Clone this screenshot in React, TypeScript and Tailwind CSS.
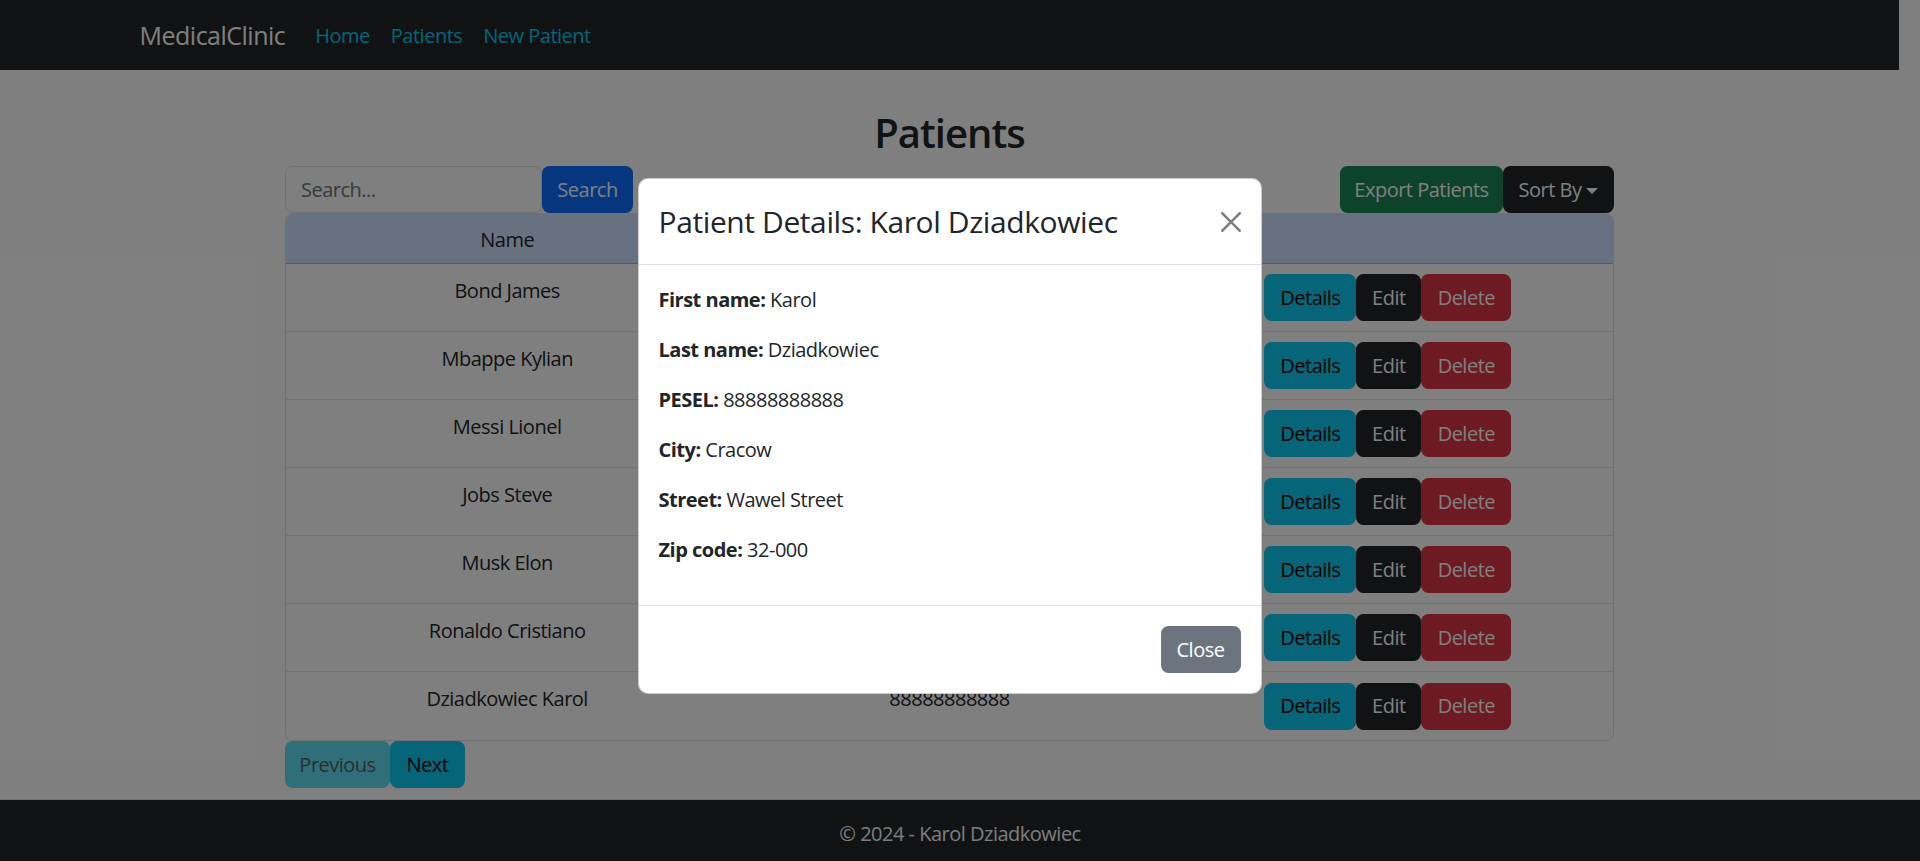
import React from 'react';

const patients = [
  { name: 'Bond James', pesel: '70010112345' },
  { name: 'Mbappe Kylian', pesel: '98122054321' },
  { name: 'Messi Lionel', pesel: '87062411223' },
  { name: 'Jobs Steve', pesel: '55022433445' },
  { name: 'Musk Elon', pesel: '71062855667' },
  { name: 'Ronaldo Cristiano', pesel: '85020577889' },
  { name: 'Dziadkowiec Karol', pesel: '88888888888' },
];

const details = [
  ['First name:', 'Karol'],
  ['Last name:', 'Dziadkowiec'],
  ['PESEL:', '88888888888'],
  ['City:', 'Cracow'],
  ['Street:', 'Wawel Street'],
  ['Zip code:', '32-000'],
];

const btn = 'h-[47px] flex items-center justify-center rounded-[7.5px] border border-transparent text-[20px] leading-[30px]';

const App: React.FC = () => {
  return (
    <div className="relative h-[861px] w-full overflow-hidden bg-white text-[#212529] tracking-[-0.5px] font-['Open_Sans','Noto_Sans',sans-serif]">
      <div className="flex h-full flex-col">
        <div className="flex-1 pr-[21px]">
          <nav className="h-[70px] bg-[#212529]">
            <div className="mx-auto flex h-full max-w-[1650px] items-center px-[15px] pt-[2px]">
              <span className="mr-[30px] text-[25px] text-white">MedicalClinic</span>
              <div className="flex gap-[21px] text-[20px] text-[#0dcaf0]">
                <span>Home</span>
                <span>Patients</span>
                <span>New Patient</span>
              </div>
            </div>
          </nav>

          <main className="mx-auto w-[1329px] pt-[39px]">
            <h2 className="mb-[9px] text-center text-[40px] font-semibold leading-[48px] tracking-[-1px]">Patients</h2>

            <div className="flex items-center justify-between">
              <div className="flex">
                <div className="flex h-[47px] w-[257px] items-center rounded-[7.5px] border border-[#dee2e6] px-[15px] text-[20px] text-[#6c757d]">
                  Search...
                </div>
                <div className={`${btn} w-[91px] bg-[#0d6efd] text-white`}>Search</div>
              </div>
              <div className="flex">
                <div className={`${btn} w-[163px] bg-[#198754] text-white`}>Export Patients</div>
                <div className={`${btn} w-[111px] gap-[5px] bg-[#212529] text-white`}>
                  Sort By
                  <span className="mt-[2px] h-0 w-0 border-x-[6px] border-t-[6px] border-x-transparent border-t-white" />
                </div>
              </div>
            </div>

            <div className="overflow-hidden rounded-[7.5px] border border-[#dee2e6] text-[20px] leading-[30px]">
              <div className="grid h-[50px] grid-cols-3 items-center border-b border-[#a6b5cc] bg-[#cfe2ff] pt-[2px] text-center">
                <div>Name</div>
                <div />
                <div />
              </div>
              {patients.map((p, i) => (
                <div
                  key={p.name}
                  className={`grid h-[68px] grid-cols-3 items-center text-center ${i < patients.length - 1 ? 'border-b border-[#dee2e6]' : ''}`}
                >
                  <div className="self-start pt-[12px]">{p.name}</div>
                  <div className="self-start pt-[12px]">{p.pesel}</div>
                  <div className="flex justify-center pr-[8px]">
                    <div className={`${btn} w-[92px] bg-[#0dcaf0] text-black`}>Details</div>
                    <div className={`${btn} w-[65px] bg-[#212529] text-white`}>Edit</div>
                    <div className={`${btn} w-[90px] bg-[#dc3545] text-white`}>Delete</div>
                  </div>
                </div>
              ))}
            </div>

            <div className="flex">
              <div className={`${btn} h-[46px] w-[105px] bg-[#0dcaf0] text-black opacity-65`}>Previous</div>
              <div className={`${btn} h-[46px] w-[75px] bg-[#0dcaf0] text-black`}>Next</div>
            </div>
          </main>
        </div>

        <footer className="flex h-[62px] items-center justify-center border-t border-[#dee2e6] bg-[#212529] pt-[6px] text-[20px] text-[#f8f9fa]">
          © 2024 - Karol Dziadkowiec
        </footer>
      </div>

      {/* modal backdrop */}
      <div className="absolute inset-0 bg-black/50" />

      <div className="absolute inset-0 flex justify-center pr-[21px] pt-[178px]">
        <div className="h-fit w-[624px] rounded-[10px] border border-black/20 bg-white">
          <div className="flex items-center justify-between border-b border-[#dee2e6] px-[20px] py-[20px]">
            <h4 className="text-[30px] font-medium leading-[45px] tracking-[-0.4px]">Patient Details: Karol Dziadkowiec</h4>
            <svg width="20" height="20" viewBox="0 0 16 16" className="opacity-50">
              <path d="M.293.293a1 1 0 0 1 1.414 0L8 6.586 14.293.293a1 1 0 1 1 1.414 1.414L9.414 8l6.293 6.293a1 1 0 0 1-1.414 1.414L8 9.414l-6.293 6.293a1 1 0 0 1-1.414-1.414L6.586 8 .293 1.707a1 1 0 0 1 0-1.414" fill="#000" />
            </svg>
          </div>
          <div className="p-[20px] text-[20px] leading-[30px]">
            {details.map(([label, value]) => (
              <p key={label} className="mb-[20px]">
                <strong className="font-bold">{label}</strong> {value}
              </p>
            ))}
          </div>
          <div className="flex justify-end border-t border-[#dee2e6] p-[20px]">
            <div className={`${btn} w-[80px] bg-[#6c757d] text-white`}>Close</div>
          </div>
        </div>
      </div>
    </div>
  );
};

export default App;
